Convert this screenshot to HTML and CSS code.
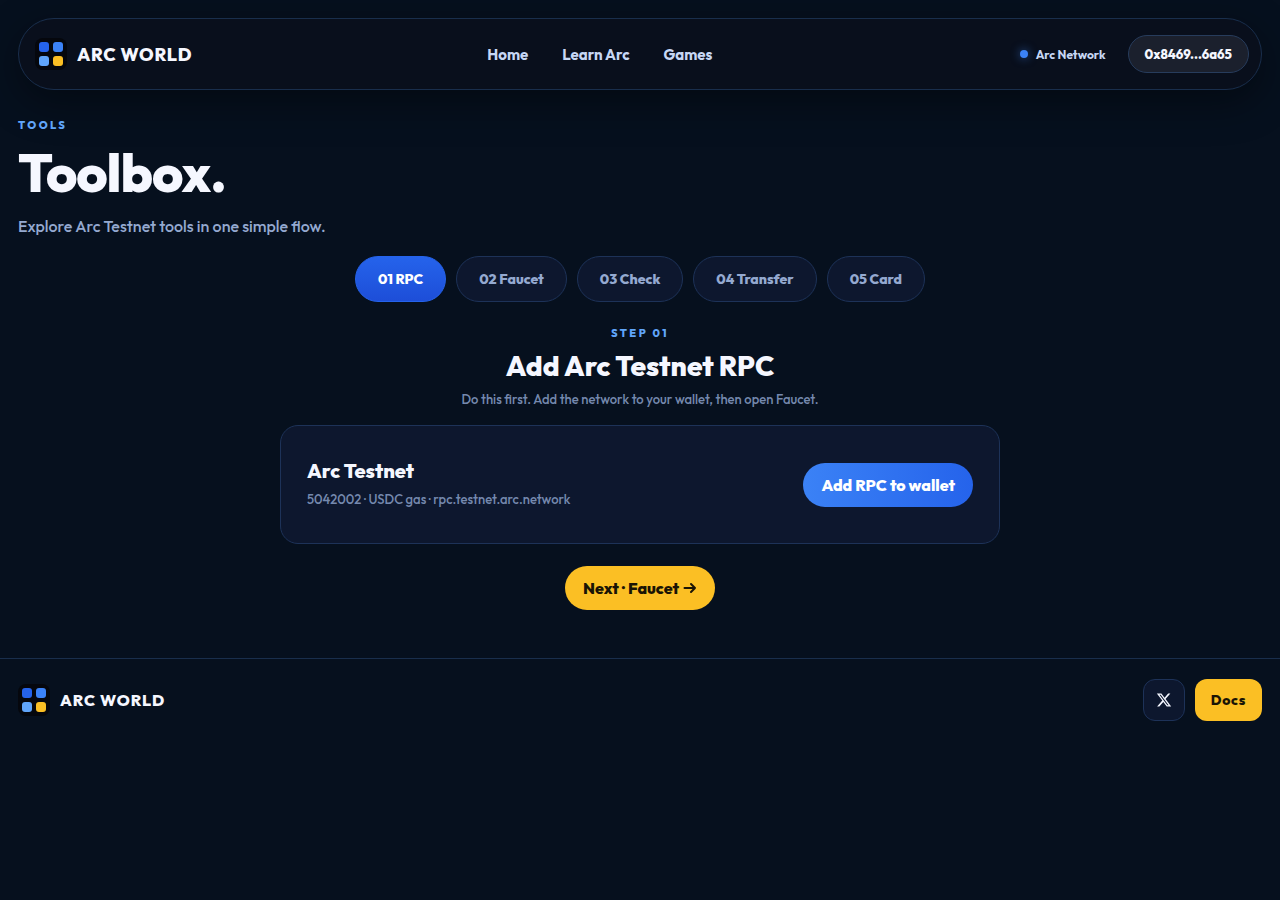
FILE: index.html
```
<!DOCTYPE html>
<html lang="en">
<head>
    <meta charset="UTF-8">
    <meta name="viewport" content="width=device-width, initial-scale=1.0">
    <title>Toolbox - Arc World</title>
    <link rel="stylesheet" href="styles.css">
</head>
<body>
    <header class="navbar">
        <a href="#" class="brand">
            <svg class="brand-mark" viewBox="0 0 32 32" aria-hidden="true">
                <rect width="32" height="32" rx="8" fill="#05070d"/>
                <rect x="4" y="4" width="10" height="10" rx="3" fill="#2563eb"/>
                <rect x="18" y="4" width="10" height="10" rx="3" fill="#3b82f6"/>
                <rect x="4" y="18" width="10" height="10" rx="3" fill="#60a5fa"/>
                <rect x="18" y="18" width="10" height="10" rx="3" fill="#fbbf24"/>
            </svg>
            <span>ARC WORLD</span>
        </a>
        <nav class="nav-links">
            <a href="#">Home</a>
            <a href="#">Learn Arc</a>
            <a href="#">Games</a>
        </nav>
        <div class="nav-right">
            <span class="network"><span class="network-dot"></span>Arc Network</span>
            <button type="button" class="wallet-btn">0x8469...6a65</button>
        </div>
    </header>

    <main>
        <section class="intro">
            <p class="eyebrow">TOOLS</p>
            <h1>Toolbox.</h1>
            <p class="lead">Explore Arc Testnet tools in one simple flow.</p>
        </section>

        <div class="tabs">
            <button type="button" class="tab active">01 RPC</button>
            <button type="button" class="tab">02 Faucet</button>
            <button type="button" class="tab">03 Check</button>
            <button type="button" class="tab">04 Transfer</button>
            <button type="button" class="tab">05 Card</button>
        </div>

        <section class="step">
            <p class="eyebrow">STEP 01</p>
            <h2>Add Arc Testnet RPC</h2>
            <p class="step-text">Do this first. Add the network to your wallet, then open Faucet.</p>

            <div class="card">
                <div class="card-info">
                    <h3>Arc Testnet</h3>
                    <p>5042002 · USDC gas · rpc.testnet.arc.network</p>
                </div>
                <button type="button" class="btn btn-blue">Add RPC to wallet</button>
            </div>

            <button type="button" class="btn btn-yellow">
                Next · Faucet
                <svg width="14" height="12" viewBox="0 0 14 12" fill="none" stroke="currentColor" stroke-width="2" stroke-linecap="round" stroke-linejoin="round" aria-hidden="true">
                    <path d="M1.5 6h10.5M8 2l4 4-4 4"/>
                </svg>
            </button>
        </section>
    </main>

    <footer class="footer">
        <a href="#" class="brand brand-small">
            <svg class="brand-mark" viewBox="0 0 32 32" aria-hidden="true">
                <rect width="32" height="32" rx="8" fill="#05070d"/>
                <rect x="4" y="4" width="10" height="10" rx="3" fill="#2563eb"/>
                <rect x="18" y="4" width="10" height="10" rx="3" fill="#3b82f6"/>
                <rect x="4" y="18" width="10" height="10" rx="3" fill="#60a5fa"/>
                <rect x="18" y="18" width="10" height="10" rx="3" fill="#fbbf24"/>
            </svg>
            <span>ARC WORLD</span>
        </a>
        <div class="footer-links">
            <a href="#" class="social" aria-label="X">
                <svg width="16" height="16" viewBox="0 0 24 24" fill="currentColor" aria-hidden="true">
                    <path d="M18.244 2.25h3.308l-7.227 8.26 8.502 11.24H16.17l-5.214-6.817L4.99 21.75H1.68l7.73-8.835L1.254 2.25H8.08l4.713 6.231zm-1.161 17.52h1.833L7.084 4.126H5.117z"/>
                </svg>
            </a>
            <a href="#" class="docs">Docs</a>
        </div>
    </footer>
</body>
</html>
```
FILE: styles.css
```
* {
    box-sizing: border-box;
    margin: 0;
    padding: 0;
}

body {
    min-height: 100vh;
    background-color: #06101e;
    color: #f5f7ff;
    font-family: Outfit, Lato, sans-serif;
    font-size: 16px;
}

a {
    color: inherit;
    text-decoration: none;
}

button {
    font-family: inherit;
    cursor: pointer;
}

/* Navbar */
.navbar {
    display: flex;
    align-items: center;
    justify-content: space-between;
    height: 72px;
    margin: 18px 18px 0;
    padding: 0 12px 0 16px;
    background-color: #090f1c;
    border: 1px solid #192e4c;
    border-radius: 36px;
    box-shadow: 0 12px 40px rgba(0, 0, 0, 0.4);
}

.brand {
    display: flex;
    align-items: center;
    gap: 10px;
    font-size: 18px;
    font-weight: 800;
    letter-spacing: 0.04em;
}

.brand-small {
    font-size: 16px;
    letter-spacing: 0.06em;
}

.brand-mark {
    width: 32px;
    height: 32px;
}

.nav-links {
    display: flex;
    gap: 34px;
    color: #c7d7f5;
    font-size: 15px;
    font-weight: 700;
}

.nav-right {
    display: flex;
    align-items: center;
    gap: 10px;
}

.network {
    display: flex;
    align-items: center;
    gap: 8px;
    padding: 0 12px;
    color: #c7d7f5;
    font-size: 12px;
    font-weight: 700;
}

.network-dot {
    width: 8px;
    height: 8px;
    border-radius: 50%;
    background-color: #3b82f6;
    box-shadow: 0 0 10px rgba(59, 130, 246, 0.6);
}

.wallet-btn {
    height: 38px;
    padding: 0 16px;
    background-color: #1b202d;
    border: 1px solid #273c5c;
    border-radius: 19px;
    color: #f5f7ff;
    font-size: 13px;
    font-weight: 800;
}

/* Intro */
.intro {
    padding: 28px 18px 0;
}

.eyebrow {
    color: #60a5fa;
    font-size: 11px;
    font-weight: 800;
    line-height: 14px;
    letter-spacing: 0.22em;
}

h1 {
    margin-top: 12px;
    font-size: 54px;
    font-weight: 800;
    line-height: 56px;
    letter-spacing: -0.02em;
}

.lead {
    margin-top: 15px;
    color: #94a9d0;
    font-size: 16px;
    font-weight: 500;
    line-height: 22px;
}

/* Step tabs */
.tabs {
    display: flex;
    flex-wrap: wrap;
    justify-content: center;
    gap: 10px;
    margin-top: 19px;
}

.tab {
    height: 46px;
    padding: 0 22px;
    background-color: #0d172e;
    border: 1px solid #1d3258;
    border-radius: 23px;
    color: #94a9d0;
    font-size: 14px;
    font-weight: 800;
}

.tab.active {
    background: linear-gradient(180deg, #2563eb, #1d4ed8);
    border-color: #2563eb;
    color: #fff;
}

/* Current step */
.step {
    display: flex;
    flex-direction: column;
    align-items: center;
    max-width: 720px;
    margin: 24px auto 0;
}

h2 {
    margin-top: 8px;
    font-size: 28px;
    font-weight: 800;
    line-height: 36px;
}

.step-text,
.card-info p {
    color: #7589ae;
    font-size: 13px;
    font-weight: 500;
    line-height: 18px;
}

.step-text {
    margin-top: 6px;
}

.card {
    display: flex;
    align-items: center;
    justify-content: space-between;
    width: 100%;
    margin-top: 17px;
    padding: 32px 26px;
    background-color: #0d172e;
    border: 1px solid #1d3258;
    border-radius: 18px;
}

.card-info {
    padding-bottom: 3px;
}

h3 {
    margin-bottom: 6px;
    font-size: 20px;
    font-weight: 800;
    line-height: 26px;
}

.btn {
    display: flex;
    align-items: center;
    gap: 4px;
    height: 44px;
    padding: 0 18px;
    border: none;
    border-radius: 22px;
    font-size: 16px;
    font-weight: 800;
}

.btn-blue {
    background: linear-gradient(90deg, #3b82f6, #2563eb);
    color: #fff;
}

.btn-yellow {
    margin-top: 22px;
    background-color: #fbbf24;
    color: #1a1405;
}

/* Footer */
.footer {
    display: flex;
    align-items: center;
    justify-content: space-between;
    margin-top: 48px;
    padding: 20px 18px;
    border-top: 1px solid #192e4c;
}

.footer-links {
    display: flex;
    gap: 10px;
}

.social {
    display: flex;
    align-items: center;
    justify-content: center;
    width: 42px;
    height: 42px;
    background-color: #0d172e;
    border: 1px solid #1d3258;
    border-radius: 12px;
}

.docs {
    display: flex;
    align-items: center;
    height: 42px;
    padding: 0 16px;
    background-color: #fbbf24;
    border-radius: 12px;
    color: #1a1405;
    font-size: 14px;
    font-weight: 800;
    letter-spacing: 0.05em;
}
```
